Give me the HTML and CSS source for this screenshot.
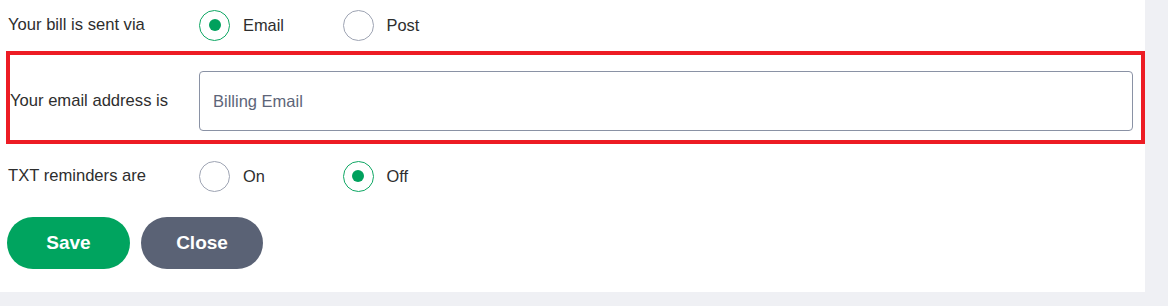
FILE: index.html
```html
<!DOCTYPE html>
<html>
<head>
<meta charset="utf-8">
<link rel="stylesheet" href="styles.css">
</head>
<body>
<div class="panel">
  <div class="row row-bill">
    <div class="label">Your bill is sent via</div>
    <label class="option"><span class="radio checked"></span><span class="opt-text">Email</span></label>
    <label class="option"><span class="radio"></span><span class="opt-text">Post</span></label>
  </div>
  <div class="row row-email">
    <div class="label label-email">Your email address is</div>
    <input class="field" type="text" placeholder="Billing Email">
  </div>
  <div class="row row-txt">
    <div class="label">TXT reminders are</div>
    <label class="option"><span class="radio"></span><span class="opt-text">On</span></label>
    <label class="option"><span class="radio checked"></span><span class="opt-text">Off</span></label>
  </div>
  <div class="actions">
    <button class="btn btn-save">Save</button>
    <button class="btn btn-close">Close</button>
  </div>
</div>
</body>
</html>
```
FILE: styles.css
```css
html, body {
  margin: 0;
  padding: 0;
  background: #eff0f4;
  font-family: "Liberation Sans", Arial, sans-serif;
  color: #2e2e2e;
}
.panel {
  width: 1145px;
  height: 292px;
  background: #ffffff;
  box-sizing: border-box;
}
.row {
  display: flex;
  align-items: center;
}
.label {
  width: 191px;
  padding-left: 8px;
  font-size: 16.6px;
  flex: none;
}
.row-bill {
  height: 50px;
}
.option {
  display: flex;
  align-items: center;
  width: 143.5px;
  font-size: 16.4px;
}
.radio {
  width: 29px;
  height: 29px;
  border: 1px solid #9ea4b3;
  border-radius: 50%;
  position: relative;
  flex: none;
}
.radio.checked {
  border-color: #0fa764;
}
.radio.checked::after {
  content: "";
  position: absolute;
  left: 8.5px;
  top: 8.5px;
  width: 12px;
  height: 12px;
  border-radius: 50%;
  background: #00a15d;
}
.opt-text {
  margin-left: 13px;
}
.row-email {
  margin-top: 1px;
  margin-left: 6px;
  width: 1139px;
  height: 93px;
  box-sizing: border-box;
  border: 4px solid #ed1c24;
  padding: 16px 8px 9px 0;
  align-items: center;
}
.label-email {
  width: 189px;
  padding-left: 0;
  margin-right: 0;
  margin-top: -1px;
}
.field {
  flex: 1;
  height: 60px;
  box-sizing: border-box;
  border: 1px solid #8a92a5;
  border-radius: 4px;
  padding: 0 13px;
  font-family: "Liberation Sans", Arial, sans-serif;
  font-size: 16.5px;
  color: #2e2e2e;
  outline: none;
}
.field::placeholder {
  color: #5d6579;
  opacity: 1;
}
.row-txt {
  height: 64px;
}
.actions {
  display: flex;
  gap: 11px;
  padding-left: 7px;
  margin-top: 9px;
}
.btn {
  height: 52px;
  border: none;
  border-radius: 26px;
  color: #ffffff;
  font-family: "Liberation Sans", Arial, sans-serif;
  font-weight: bold;
  font-size: 19px;
  padding: 0;
}
.btn-save {
  width: 123px;
  background: #00a45f;
}
.btn-close {
  width: 122px;
  background: #5a6275;
}
```
